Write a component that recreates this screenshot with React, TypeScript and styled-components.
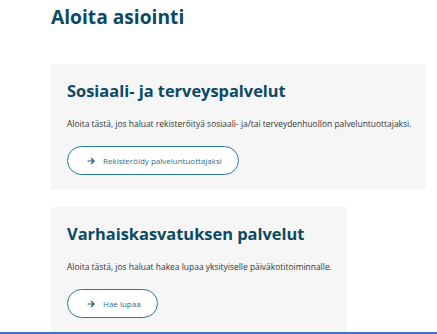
import React from 'react';
import styled, { createGlobalStyle } from 'styled-components';

const GlobalStyle = createGlobalStyle`
  html, body {
    margin: 0;
    padding: 0;
    background: #ffffff;
    font-family: 'Open Sans', 'Noto Sans', sans-serif;
  }
`;

const Page = styled.main`
  padding: 2px 0 40px 51px;
  display: flex;
  flex-direction: column;
  align-items: flex-start;
`;

const PageTitle = styled.h1`
  margin: 0 0 33px;
  font-size: 19.2px;
  line-height: 29px;
  font-weight: 700;
  color: #0b4a62;
`;

const CardList = styled.div`
  display: flex;
  flex-direction: column;
  align-items: flex-start;
  gap: 17px;
`;

const Card = styled.section`
  width: fit-content;
  background: #f6f6f6;
  border-radius: 3px;
  padding: 14px 15px 15px 16px;
`;

const CardTitle = styled.h2`
  margin: 0 0 14px;
  font-size: 16.4px;
  line-height: 26px;
  font-weight: 700;
  color: #0b4a62;
`;

const CardText = styled.p`
  margin: 0 0 16px;
  font-size: 8.45px;
  line-height: 12px;
  color: #333333;
`;

const ActionButton = styled.button`
  display: inline-flex;
  align-items: center;
  gap: 8px;
  height: 29px;
  padding: 0 16px 0 19px;
  border: 1.5px solid #2c7899;
  border-radius: 15px;
  background: #ffffff;
  color: #2b6f8c;
  font-family: 'Open Sans', 'Noto Sans', sans-serif;
  font-size: 8px;
  cursor: pointer;
`;

const BottomBar = styled.div`
  position: fixed;
  left: 0;
  right: 0;
  bottom: 0;
  height: 2px;
  background: #3f74c4;
`;

const Arrow = () => (
  <svg width="8" height="8" viewBox="0 0 16 16" fill="none" stroke="#1f5670" strokeWidth="2.4" strokeLinecap="round" strokeLinejoin="round">
    <path d="M2 8h12M9 3l5 5-5 5" />
  </svg>
);

const services = [
  {
    title: 'Sosiaali- ja terveyspalvelut',
    text: 'Aloita tästä, jos haluat rekisteröityä sosiaali- ja/tai terveydenhuollon palveluntuottajaksi.',
    action: 'Rekisteröidy palveluntuottajaksi',
  },
  {
    title: 'Varhaiskasvatuksen palvelut',
    text: 'Aloita tästä, jos haluat hakea lupaa yksityiselle päiväkotitoiminnalle.',
    action: 'Hae lupaa',
  },
];

const App: React.FunctionComponent = () => {
  return (
    <>
      <GlobalStyle />
      <Page>
        <PageTitle>Aloita asiointi</PageTitle>
        <CardList>
          {services.map((s) => (
            <Card key={s.title}>
              <CardTitle>{s.title}</CardTitle>
              <CardText>{s.text}</CardText>
              <ActionButton>
                <Arrow />
                {s.action}
              </ActionButton>
            </Card>
          ))}
        </CardList>
      </Page>
      <BottomBar />
    </>
  );
};

export default App;
